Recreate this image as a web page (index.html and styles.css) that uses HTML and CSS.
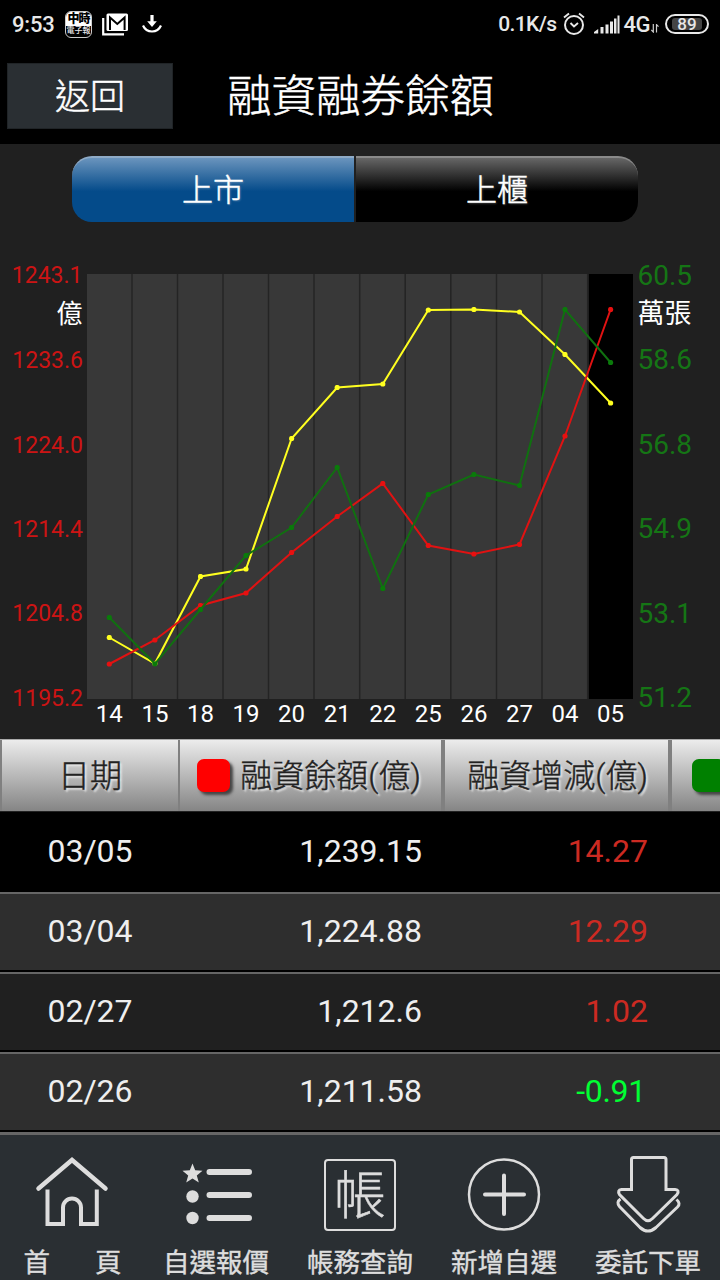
FILE: index.html
```
<!DOCTYPE html>
<html lang="zh-Hant">
<head>
    <meta charset="UTF-8">
    <title>融資融券餘額</title>
    <link rel="stylesheet" href="styles.css">
</head>
<body>

<div class="status-bar">
    <span class="clock">9:53</span>
    <div class="news-icon"><span class="news-top">中時</span><span class="news-bottom">電子報</span></div>
    <svg class="gmail-icon" width="27" height="23" viewBox="0 0 27 23">
        <path d="M1.2 5v16.3H22" fill="none" stroke="#fff" stroke-width="2.2"/>
        <rect x="4.500" y="0.500" width="21.500" height="17.500" rx="1.500" fill="#fff"/>
        <path d="M8 17V4.500l7.300 6.500L22.600 4.500V17" fill="none" stroke="#000" stroke-width="2"/>
    </svg>
    <svg class="download-icon" width="20" height="20" viewBox="0 0 20 20">
        <path d="M10 1v8" stroke="#fff" stroke-width="3.200" fill="none"/>
        <path d="M5.200 7.200h9.600L10 13z" fill="#fff"/>
        <path d="M1 11.500c3.500 8 14.500 8 18 0" fill="none" stroke="#fff" stroke-width="2.200"/>
    </svg>
    <div class="status-right">
        <span class="speed">0.1K/s</span>
        <svg class="alarm-icon" width="22" height="24" viewBox="0 0 22 24">
            <circle cx="11" cy="13" r="9" fill="none" stroke="#e8e8e8" stroke-width="2"/>
            <path d="M7.500 11l3.500 3.500 4-3.500M1 5.500L6 1.500M16 1.500l5 4" fill="none" stroke="#e8e8e8" stroke-width="1.900"/>
        </svg>
        <svg class="signal-icon" width="26" height="19" viewBox="0 0 26 19">
            <path d="M0 18.500v-1.500l4.200-3v4.500zM6.500 12h3v6.500h-3zM11.500 9.500h3v9h-3zM16 6.500h3v12h-3zM20 3.500h2.500v15H20zM23.500 .5h2v18h-2z" fill="#e8e8e8"/>
        </svg>
        <span class="network">4G</span>
        <svg class="data-icon" width="8" height="9" viewBox="0 0 8 9">
            <path d="M2.300 0v8L.3 6M5.500 8.500V.6l2 2" fill="none" stroke="#ccc" stroke-width="1.200"/>
        </svg>
        <div class="battery"><span>89</span></div>
    </div>
</div>

<div class="title-bar">
    <a class="back" href="#">返回</a>
    <h1>融資融券餘額</h1>
</div>

<div class="tabs">
    <a class="tab active" href="#">上市</a>
    <a class="tab" href="#">上櫃</a>
</div>

<svg class="chart" width="720" height="517" viewBox="0 222 720 517">
    <rect x="87" y="274" width="546" height="425" fill="#383838"/>
    <rect x="588.500" y="274" width="44.500" height="425" fill="#000"/>
    <path class="grid" d="M132 274v425M177.500 274v425M223 274v425M268.500 274v425M314 274v425M359.700 274v425M405.200 274v425M450.800 274v425M496.500 274v425M542 274v425M587.700 274v425"/>

    <g class="axis-left">
        <text x="82.500" y="283">1243.1</text>
        <text x="83" y="368">1233.6</text>
        <text x="83" y="452.500">1224.0</text>
        <text x="83" y="537">1214.4</text>
        <text x="83" y="621">1204.8</text>
        <text x="83" y="705.500">1195.2</text>
    </g>
    <g class="axis-right">
        <text x="637.500" y="284.500">60.5</text>
        <text x="637.500" y="369">58.6</text>
        <text x="637.500" y="453.500">56.8</text>
        <text x="637.500" y="538">54.9</text>
        <text x="637.500" y="622.500">53.1</text>
        <text x="637.500" y="707">51.2</text>
    </g>
    <text class="unit-left" x="82.500" y="323">億</text>
    <text class="unit-right" x="637.500" y="323">萬張</text>
    <g class="axis-x">
        <text x="109.300" y="722">14</text>
        <text x="154.900" y="722">15</text>
        <text x="200.500" y="722">18</text>
        <text x="246" y="722">19</text>
        <text x="291.600" y="722">20</text>
        <text x="337.200" y="722">21</text>
        <text x="382.800" y="722">22</text>
        <text x="428.300" y="722">25</text>
        <text x="473.900" y="722">26</text>
        <text x="519.500" y="722">27</text>
        <text x="565" y="722">04</text>
        <text x="610.600" y="722">05</text>
    </g>

    <defs>
        <marker id="dot-yellow" markerWidth="6" markerHeight="6" refX="3" refY="3" markerUnits="userSpaceOnUse"><circle cx="3" cy="3" r="2.600" fill="#ffff20"/></marker>
        <marker id="dot-red" markerWidth="6" markerHeight="6" refX="3" refY="3" markerUnits="userSpaceOnUse"><circle cx="3" cy="3" r="2.600" fill="#e81010"/></marker>
        <marker id="dot-green" markerWidth="6" markerHeight="6" refX="3" refY="3" markerUnits="userSpaceOnUse"><circle cx="3" cy="3" r="2.600" fill="#0a7a0a"/></marker>
    </defs>
    <polyline class="line yellow" points="109.300,637.500 154.900,663.500 200.500,576.500 246,569 291.600,438.500 337.200,387.500 382.800,384 428.300,310 473.900,309.500 519.500,312 565,354.500 610.600,403"/>
    <polyline class="line red" points="109.300,664 154.900,640 200.500,605.500 246,593 291.600,552.500 337.200,516.500 382.800,483.500 428.300,545.500 473.900,554 519.500,544.500 565,436 610.600,309.500"/>
    <polyline class="line green" points="109.300,617.500 154.900,663.800 200.500,609.500 246,555.500 291.600,527.500 337.200,467.500 382.800,588.500 428.300,494.500 473.900,474.500 519.500,485.500 565,309.500 610.600,362.500"/>
</svg>

<div class="table">
    <div class="row head">
        <div class="cell">日期</div>
        <div class="cell"><i class="swatch swatch-red"></i>融資餘額(億)</div>
        <div class="cell">融資增減(億)</div>
        <div class="cell"><i class="swatch swatch-green"></i></div>
    </div>
    <div class="row">
        <div class="cell">03/05</div>
        <div class="cell">1,239.15</div>
        <div class="cell up">14.27</div>
    </div>
    <div class="row">
        <div class="cell">03/04</div>
        <div class="cell">1,224.88</div>
        <div class="cell up">12.29</div>
    </div>
    <div class="row">
        <div class="cell">02/27</div>
        <div class="cell">1,212.6</div>
        <div class="cell up">1.02</div>
    </div>
    <div class="row">
        <div class="cell">02/26</div>
        <div class="cell">1,211.58</div>
        <div class="cell down">-0.91</div>
    </div>
</div>

<div class="nav">
    <a href="#">
        <svg width="80" height="80" viewBox="0 20 80 80">
            <path d="M6.500 53.500L40 25l33.500 28.500" stroke-width="4.500" stroke-linecap="round"/>
            <path d="M15.500 54.500v34.500H31V72.500a9 9 0 0 1 18 0v16.500h15.800V54.500" stroke-width="4"/>
        </svg>
        <span class="wide">首頁</span>
    </a>
    <a href="#">
        <svg width="80" height="80" viewBox="0 0 80 80">
            <path class="solid" d="M16.500 8.500l2.700 6.800 7.300.4-5.700 4.700 2 7.100-6.300-4-6.300 4 2-7.100-5.700-4.700 7.300-.4z"/>
            <circle class="solid" cx="16.500" cy="41.500" r="6.200"/>
            <circle class="solid" cx="16.500" cy="63" r="6.200"/>
            <path d="M33.500 17H73M33.500 40H73M33.500 63H73" stroke-width="6" stroke-linecap="round"/>
        </svg>
        <span>自選報價</span>
    </a>
    <a href="#">
        <div class="account-icon">帳</div>
        <span>帳務查詢</span>
    </a>
    <a href="#">
        <svg width="80" height="80" viewBox="0 0 80 80">
            <circle cx="40" cy="39.500" r="35" stroke-width="2.500"/>
            <path d="M40 20.500v38.500M21 39.500h39" stroke-width="4" stroke-linecap="round"/>
        </svg>
        <span>新增自選</span>
    </a>
    <a href="#">
        <svg width="80" height="80" viewBox="0 0 80 80">
            <path d="M23.500 34.500V4.500q0-2 2-2h30.500q2 0 2 2v30h9q5 .5 2 5L44.500 63.500q-4.500 4.500-9 0L11.500 39.500q-2.500-4.500 2-5z" stroke-width="3"/>
            <path d="M12.500 44q-4.500 3-1 7.500L32 72.500q8 7 16 0L69.500 52q3.500-3.500-1-7.500" stroke-width="3"/>
        </svg>
        <span>委託下單</span>
    </a>
</div>

</body>
</html>
```
FILE: styles.css
```
* {
    box-sizing: border-box;
}
body {
    margin: 0;
    width: 720px;
    height: 1280px;
    overflow: hidden;
    display: flex;
    flex-direction: column;
    font-family: Roboto, 'Noto Sans CJK TC', sans-serif;
    background-color: #202020;
    color: #fff;
}
a {
    color: inherit;
    text-decoration: none;
}

/* status bar */
.status-bar {
    height: 48px;
    padding: 0 11px 0 12px;
    display: flex;
    align-items: center;
    background-color: #000;
    color: #e8e8e8;
    font-size: 22px;
    font-weight: 500;
}
.clock {
    width: 53px;
    letter-spacing: -0.2px;
}
.speed {
    font-size: 21px;
    letter-spacing: -0.6px;
}
.news-icon {
    width: 27px;
    height: 27px;
    border: 1px solid #ccc;
    border-radius: 6px;
    overflow: hidden;
    display: flex;
    flex-direction: column;
    text-align: center;
    white-space: nowrap;
}
.news-top {
    height: 14px;
    font-size: 12px;
    line-height: 14px;
    font-weight: 900;
    letter-spacing: -1px;
    background-color: #fff;
    color: #000;
}
.news-bottom {
    font-size: 8px;
    line-height: 10px;
}
.gmail-icon {
    margin-left: 10px;
}
.download-icon {
    margin-left: 13px;
}
.status-right {
    margin-left: auto;
    display: flex;
    align-items: center;
}
.alarm-icon {
    margin-left: 6px;
}
.signal-icon {
    margin: 0 4px 0 9px;
}
.network {
    letter-spacing: -0.5px;
}
.data-icon {
    margin: 8px 6px 0 1px;
}
.battery {
    width: 44px;
    height: 20px;
    padding: 2px 5px;
    border: 2px solid #e8e8e8;
    border-radius: 10px;
    display: flex;
}
.battery span {
    flex: 1;
    background-color: #444;
    font-size: 17px;
    line-height: 12px;
    text-align: center;
    border-radius: 3px;
}

/* title */
.title-bar {
    height: 96px;
    padding: 15px 7px;
    display: flex;
    background-color: #000;
}
.back {
    width: 166px;
    height: 66px;
    border: 1px solid #202427;
    background-color: #2a2f33;
    font-size: 35px;
    font-weight: 300;
    line-height: 68px;
    text-align: center;
    -webkit-text-stroke: 0.5px;
}
.title-bar h1 {
    margin: 0 0 0 54px;
    font-size: 44.500px;
    font-weight: 300;
    line-height: 69px;
    -webkit-text-stroke: 0.5px;
}

/* tabs */
.tabs {
    height: 78px;
    padding: 12px 82px 0 72px;
    display: flex;
    gap: 2px;
}
.tab {
    flex: 1;
    height: 66px;
    border-top: 2px solid #8a8a8a;
    border-radius: 0 20px 20px 0;
    background: linear-gradient(#666, #000 52%);
    font-size: 31px;
    font-weight: 300;
    line-height: 66px;
    text-align: center;
    text-shadow: 1px 1px 2px rgba(255, 255, 255, 0.3);
    -webkit-text-stroke: 0.5px;
}
.tab.active {
    border-top-color: #8fabc7;
    border-radius: 20px 0 0 20px;
    background: linear-gradient(#6a94bd, #044b8a 52%);
}

/* chart */
.chart {
    display: block;
    flex-shrink: 0;
}
.grid {
    stroke: #242424;
    stroke-width: 1.500px;
}
.axis-left {
    fill: #cc1414;
    font-size: 23px;
    text-anchor: end;
}
.axis-right {
    fill: #157515;
    font-size: 28px;
}
.axis-x {
    fill: #fff;
    font-size: 24px;
    text-anchor: middle;
}
.unit-left {
    fill: #fff;
    font-size: 26px;
    text-anchor: end;
}
.unit-right {
    fill: #fff;
    font-size: 27px;
}
.line {
    fill: none;
    stroke-width: 2px;
}
.yellow {
    stroke: #ffff20;
    marker: url(#dot-yellow);
}
.red {
    stroke: #e01212;
    marker: url(#dot-red);
}
.green {
    stroke: #107010;
    marker: url(#dot-green);
}

/* table */
.table {
    height: 396px;
    overflow: hidden;
    flex-shrink: 0;
    border-bottom: 3px solid #666;
}
.row {
    display: grid;
    grid-template-columns: 180px 265px 227px 48px;
    height: 80px;
    border-top: 2px solid #666;
    border-bottom: 2px solid #000;
    background-color: #2e2e2e;
    font-size: 32px;
    line-height: 75px;
    color: #eee;
}
.row:nth-child(2) {
    height: 81px;
    border-top: 1px solid #222;
    background-color: #000;
    line-height: 78px;
}
.row:nth-child(4) {
    background-color: #202020;
}
.row .cell {
    text-align: right;
    padding-right: 23px;
}
.row .cell:first-child {
    text-align: center;
    padding-right: 0;
}
.row .up {
    color: #cc2a22;
    padding-right: 24px;
}
.row .down {
    color: #0f3;
    padding-right: 26px;
    letter-spacing: -0.3px;
}
.row.head {
    height: 72px;
    border: none;
    border-top: 1px solid #aaa;
    background: linear-gradient(#ececec, #858585);
    color: #222;
    font-weight: 300;
    line-height: 70px;
    text-shadow: 2px 2px 2px #eee;
    -webkit-text-stroke: 0.4px;
}
.head .cell {
    display: flex;
    align-items: center;
    justify-content: flex-end;
    border-right: 4px solid #808080;
    padding-right: 20px;
    white-space: nowrap;
}
.head .cell:first-child {
    justify-content: center;
    border-right-width: 2px;
    border-left: 2px solid #808080;
}
.head .cell:last-child {
    justify-content: flex-start;
    border-right: none;
    padding: 0 0 0 20px;
}
.swatch {
    width: 33px;
    height: 33px;
    margin-right: 10px;
    border-radius: 7px;
    flex-shrink: 0;
    box-shadow: 3px 3px 3px #444;
}
.swatch-red {
    background-color: #f00;
}
.swatch-green {
    background-color: #008000;
}

/* bottom nav */
.nav {
    height: 145px;
    padding-top: 20px;
    display: grid;
    grid-template-columns: repeat(5, 144px);
    background-color: #2a2f33;
    color: #ddd;
    font-size: 26.500px;
    font-weight: 400;
}
.nav a {
    display: flex;
    flex-direction: column;
    align-items: center;
}
.nav svg {
    overflow: visible;
    fill: none;
    stroke: #ddd;
}
.nav .solid {
    fill: #ddd;
    stroke: none;
}
.nav span {
    margin-top: 8px;
    line-height: 40px;
    white-space: nowrap;
    -webkit-text-stroke: 0.4px;
}
.nav .wide {
    width: 98px;
    display: flex;
    justify-content: space-between;
    text-align-last: justify;
    letter-spacing: 45px;
    margin-right: -1px;
}
.account-icon {
    width: 72px;
    height: 72px;
    margin: 4px 0;
    border: 2.500px solid #ddd;
    border-radius: 4px;
    font-size: 52px;
    font-weight: 300;
    line-height: 72px;
    text-align: center;
    -webkit-text-stroke: 0.5px;
}
```
